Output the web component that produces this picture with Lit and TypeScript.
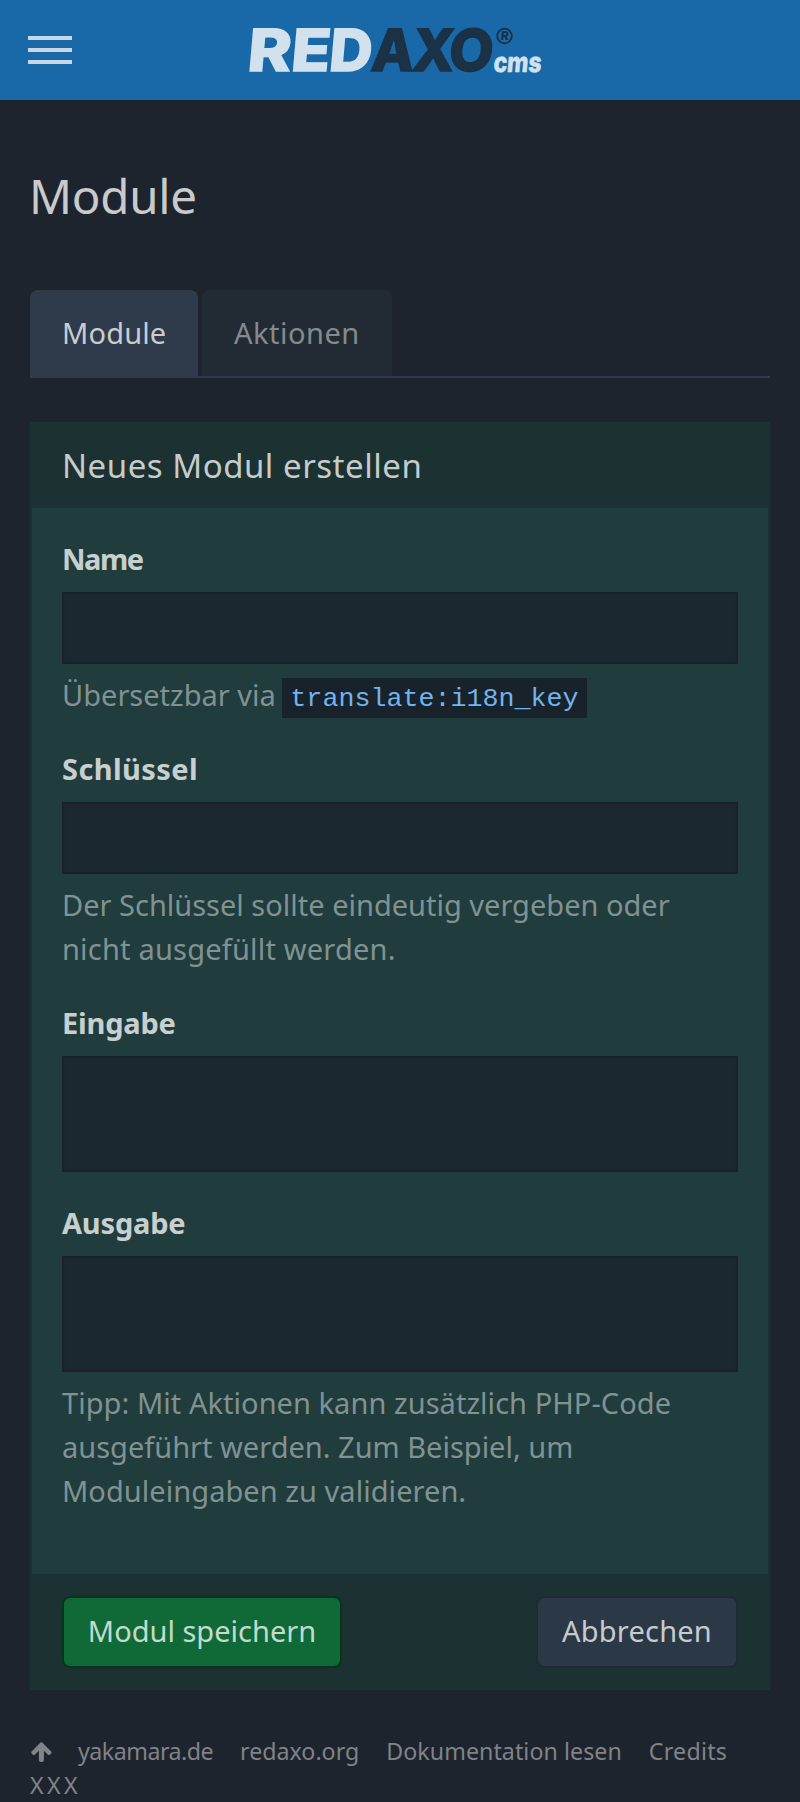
import { LitElement, html, svg, css, nothing } from "lit";
import { customElement, property } from "lit/decorators.js";

interface Glyph {
  char: string;
  x: number;
  width: number;
  tone: "light" | "dark";
}

const WORDMARK: Glyph[] = [
  { char: "R", x: 246.5, width: 43.5, tone: "light" },
  { char: "E", x: 290, width: 39, tone: "light" },
  { char: "D", x: 328, width: 43, tone: "light" },
  { char: "A", x: 370, width: 43, tone: "dark" },
  { char: "X", x: 411, width: 42, tone: "dark" },
  { char: "O", x: 447.5, width: 44.5, tone: "dark" },
];

@customElement("rex-topbar")
class RexTopbar extends LitElement {
  static styles = css`
    :host { display: flex; height: 100px; background: #1968a8; }
    svg { display: block; }
    .mark { font-family: "Inter", sans-serif; font-weight: 800; font-size: 58px; }
    .light { fill: #d2e1ee; stroke: #d2e1ee; stroke-width: 1.4px; }
    .dark { fill: #1b3145; stroke: #1b3145; stroke-width: 1.4px; }
    .cms { font-size: 27.5px; stroke-width: 0.6px; }
    .reg { font-size: 12px; stroke-width: 0; }
    .ring { fill: none; stroke: #1b3145; stroke-width: 1.8px; }
    .bar { fill: #c7d7e6; }
  `;
  render() {
    return html`<svg width="800" height="100" viewBox="0 0 800 100" role="img" aria-label="REDAXO CMS">
      <rect class="bar" x="28" y="36" width="44" height="4"></rect>
      <rect class="bar" x="28" y="48" width="44" height="4"></rect>
      <rect class="bar" x="28" y="60" width="44" height="4"></rect>
      <g class="mark" transform="translate(0 71) skewX(-5)">
        ${WORDMARK.map(
          (g) => svg`<text class=${g.tone} x=${g.x} y="0" textLength=${g.width} lengthAdjust="spacingAndGlyphs">${g.char}</text>`
        )}
        <text class="light cms" x="493" y="0.5" textLength="48" lengthAdjust="spacingAndGlyphs">cms</text>
      </g>
      <circle class="ring" cx="504.5" cy="36" r="7.3"></circle>
      <text class="mark dark reg" x="500.6" y="40.4" transform="translate(3.5 0) skewX(-5)">R</text>
    </svg>`;
  }
}

@customElement("rex-field")
class RexField extends LitElement {
  @property() label = "";
  @property({ type: Boolean }) multiline = false;
  @property({ type: Boolean }) hint = false;

  static styles = css`
    :host { display: block; }
    .label { display: block; margin-bottom: 11px; line-height: 44px; font-weight: 700; color: #c7cfcf; }
    .Name { letter-spacing: -1.5px; }
    .Schlüssel { letter-spacing: 0.4px; }
    .Eingabe { letter-spacing: -0.2px; }
    .Ausgabe { letter-spacing: -0.2px; }
    .control {
      display: block; box-sizing: border-box; width: 100%; height: 72px; margin: 0; padding: 10px 22px;
      border: 2px solid #18202a; border-radius: 0; background: #1c2830; color: #c7cfcf;
      font: inherit; resize: none; outline: none; box-shadow: inset 0 2px 2px rgba(0, 0, 0, 0.075);
    }
    .area { height: 116px; }
    .help { margin-top: 9px; padding-bottom: 1px; line-height: 44px; color: #809292; }
  `;
  render() {
    return html`
      <label class="label ${this.label}" for="control">${this.label}</label>
      ${this.multiline
        ? html`<textarea id="control" class="control area"></textarea>`
        : html`<input id="control" class="control" type="text" />`}
      ${this.hint ? html`<div class="help"><slot></slot></div>` : nothing}
    `;
  }
}

@customElement("app-root")
class AppRoot extends LitElement {
  static styles = css`
    :host {
      display: block; min-height: 1802px; background: #1d242d; color: #c9cbcd;
      font-family: "Noto Sans", sans-serif; font-size: 29px; line-height: 44px;
    }
    .page { padding: 66px 30px 0; }
    .title { margin: 0 0 64px -1px; font-size: 47.5px; line-height: 60px; font-weight: 400; letter-spacing: -0.3px; color: #c8cacb; }
    .tabs { display: flex; gap: 4px; height: 86px; border-bottom: 2px solid #2f3b4b; }
    .tab {
      box-sizing: border-box; height: 86px; padding: 21px 0 21px 32px; width: 190px; white-space: nowrap;
      border-radius: 8px 8px 0 0; background: #222b34; color: #848a8f; letter-spacing: 0.5px;
    }
    .active { width: 168px; height: 88px; background: #2f3b4b; color: #c9ccd0; letter-spacing: 0.15px; }
    .panel { margin-top: 44px; background: #1c3132; }
    .heading { height: 43px; padding: 22px 32px 21px; font-size: 33px; letter-spacing: 0.52px; color: #c6cccc; }
    .fields {
      display: flex; flex-direction: column; gap: 29px; box-sizing: border-box; height: 1066px;
      margin: 0 2px; padding: 29px 30px 0; background: #203c3d;
    }
    .line { display: block; white-space: nowrap; }
    .wide { letter-spacing: 0.2px; }
    .tip { letter-spacing: 0.05px; }
    .key {
      margin-left: -1px; padding: 6px 8px 4px; background: #18222a; color: #73b3ed; line-height: 1;
      font-family: "Liberation Mono", monospace; font-size: 26.7px;
    }
    .actions { display: flex; justify-content: space-between; padding: 22px 32px; }
    .button {
      box-sizing: border-box; height: 72px; margin: 0; padding: 11px 0 0; border: 2px solid #202a34; border-radius: 8px;
      background: #2b3947; color: #c6cbce; font: inherit; display: block; text-align: center; letter-spacing: 0.2px; width: 202px;
    }
    .save { width: 280px; border-color: #08331f; background: #0f6a38; color: #c3dacd; letter-spacing: 0; }
    .footer { margin-top: 44px; font-size: 23.2px; line-height: 34px; color: #808388; white-space: nowrap; }
    .links { display: flex; gap: 27px; }
    .up { display: block; width: 22px; height: 34px; margin-right: -1px; }
    .up path { fill: #808388; }
    .yakamara { letter-spacing: -0.5px; }
    .docs { letter-spacing: 0.06px; }
    .credits { letter-spacing: 0.25px; }
    .name { letter-spacing: 3.4px; }
  `;
  render() {
    return html`
      <rex-topbar></rex-topbar>
      <main class="page">
        <h1 class="title">Module</h1>
        <nav class="tabs">
          <div class="tab active">Module</div>
          <div class="tab">Aktionen</div>
        </nav>
        <section class="panel">
          <div class="heading">Neues Modul erstellen</div>
          <div class="fields">
            <rex-field label="Name" hint>Übersetzbar via <span class="key">translate:i18n_key</span></rex-field>
            <rex-field label="Schlüssel" hint>
              <span class="line">Der Schlüssel sollte eindeutig vergeben oder</span>
              <span class="line wide">nicht ausgefüllt werden.</span>
            </rex-field>
            <rex-field label="Eingabe" multiline></rex-field>
            <rex-field label="Ausgabe" multiline hint>
              <span class="line tip">Tipp: Mit Aktionen kann zusätzlich PHP-Code</span>
              <span class="line">ausgeführt werden. Zum Beispiel, um</span>
              <span class="line tip">Moduleingaben zu validieren.</span>
            </rex-field>
          </div>
          <div class="actions">
            <div class="button save" role="button">Modul speichern</div>
            <div class="button" role="button">Abbrechen</div>
          </div>
        </section>
        <footer class="footer">
          <div class="links">
            <svg class="up" viewBox="0 0 22 34">
              <path d="M10.5 8.6 Q11.4 7.8 12.3 8.6 L21.2 17.6 Q22 18.5 21.2 19.4 L19.8 20.8 Q18.9 21.5 18 20.8 L13.9 16.8 V26 Q13.9 28 12 28 H10.8 Q8.9 28 8.9 26 V16.8 L4.8 20.8 Q3.9 21.5 3 20.8 L1.6 19.4 Q0.8 18.5 1.6 17.6 Z"></path>
            </svg>
            <span class="yakamara">yakamara.de</span>
            <span>redaxo.org</span>
            <span class="docs">Dokumentation lesen</span>
            <span class="credits">Credits</span>
          </div>
          <div class="name">XXX</div>
        </footer>
      </main>
    `;
  }
}
